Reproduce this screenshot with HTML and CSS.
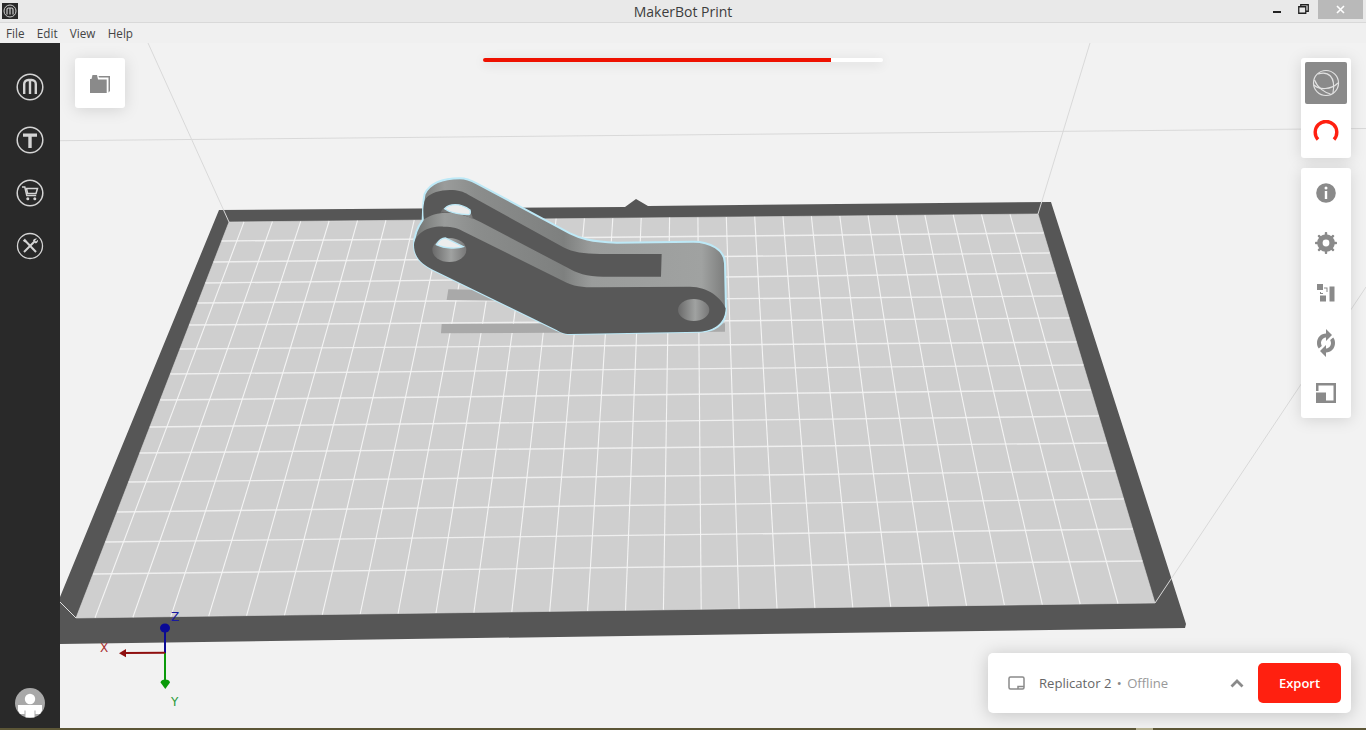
FILE: index.html
```html
<!DOCTYPE html>
<html lang="en">
<head>
<meta charset="utf-8">
<title>MakerBot Print</title>
<link rel="stylesheet" href="styles.css">
</head>
<body>
<div class="app">
  <header class="titlebar">
    <div class="app-icon">
      <svg viewBox="0 0 16 16" width="16" height="16"><circle cx="8" cy="8" r="6" fill="none" stroke="#ccc" stroke-width="1"/><path d="M5 11.500V6.500a1.500 1.500 0 0 1 1.500-1.500h3A1.500 1.500 0 0 1 11 6.500v5M8 5v6.500" fill="none" stroke="#ccc" stroke-width="1.200"/></svg>
    </div>
    <div class="title">MakerBot Print</div>
    <div class="win-controls">
      <svg class="win-min" viewBox="0 0 8 2" width="8" height="2"><rect width="8" height="2" fill="#222"/></svg>
      <svg class="win-max" viewBox="0 0 11 10" width="11" height="10"><path d="M.75 2.750h7v6.500h-7zM2.750 2.500V.75h7.500v6.500H8" fill="none" stroke="#222" stroke-width="1.300"/></svg>
      <div class="win-close"><svg viewBox="0 0 9 9" width="9" height="9"><path d="M1 1l7 7M8 1L1 8" stroke="#fff" stroke-width="1.600"/></svg></div>
    </div>
  </header>
  <nav class="menubar"><span>File</span><span>Edit</span><span>View</span><span>Help</span></nav>
  <div class="main">
    <aside class="sidebar">
      <div class="side-top">
        <svg class="side-icon" viewBox="0 0 28 28"><circle cx="14" cy="14" r="12.800" fill="none" stroke="#d4d4d4" stroke-width="1.500"/><path d="M8.200 21V11a4 4 0 0 1 4-4h3.600a4 4 0 0 1 4 4v10M14 7.500V21" fill="none" stroke="#d4d4d4" stroke-width="2.400"/></svg>
        <svg class="side-icon" viewBox="0 0 28 28"><circle cx="14" cy="14" r="12.800" fill="none" stroke="#d4d4d4" stroke-width="1.500"/><path d="M7 7.500h14v3.300h-5.300V22h-3.400V10.800H7z" fill="#d4d4d4"/></svg>
        <svg class="side-icon" viewBox="0 0 28 28"><circle cx="14" cy="14" r="12.800" fill="none" stroke="#d4d4d4" stroke-width="1.500"/><path d="M6 8h2.800l2 8.500h9.400" fill="none" stroke="#d4d4d4" stroke-width="1.500"/><path d="M10.500 9.500h11l-1.500 5h-8.400z" fill="none" stroke="#d4d4d4" stroke-width="1.500"/><circle cx="11.800" cy="19.800" r="1.500" fill="#d4d4d4"/><circle cx="18.800" cy="19.800" r="1.500" fill="#d4d4d4"/></svg>
        <svg class="side-icon" viewBox="0 0 28 28"><circle cx="14" cy="14" r="12.500" fill="none" stroke="#d4d4d4" stroke-width="1.300"/><path d="M9 8.500l11 11.500" stroke="#d4d4d4" stroke-width="2"/><path d="M18.500 9.500L8 20" stroke="#d4d4d4" stroke-width="2"/><path d="M6.800 8.800l2.200-2.200 1.600 2.600-1.400 1.400zM17 8.500c.5-1.500 2.500-2.500 4-1.800l-2 1.900 1 1 1.900-1.800c.5 1.600-.6 3.400-2.300 3.800z" fill="#d4d4d4"/></svg>
      </div>
      <svg class="avatar" viewBox="0 0 30 30"><circle cx="15" cy="15" r="15" fill="#a8a8a8"/><circle cx="15" cy="11" r="5.200" fill="#fff"/><path d="M3 17h24v5.500l-2 3.500h-4.500v-3.500h-1V29.500h-9V22.500h-1V26H5l-2-3.500z" fill="#fff"/></svg>
    </aside>
    <section class="viewport">
      <svg class="scene" viewBox="60 43 1306 685" width="1306" height="685">
        <defs>
          <linearGradient id="band" gradientUnits="userSpaceOnUse" x1="40" y1="0" x2="980" y2="0">
            <stop offset="0" stop-color="#6f716f"/>
            <stop offset=".1" stop-color="#9a9c9b"/>
            <stop offset=".2" stop-color="#8b8d8c"/>
            <stop offset=".48" stop-color="#7e807f"/>
            <stop offset=".57" stop-color="#9a9c9b"/>
            <stop offset=".92" stop-color="#a0a2a1"/>
            <stop offset="1" stop-color="#7a7b7a"/>
          </linearGradient>
          <linearGradient id="hole" x1="0" y1="0" x2="1" y2="0">
            <stop offset="0" stop-color="#6a6a6a"/>
            <stop offset=".55" stop-color="#a0a2a1"/>
            <stop offset="1" stop-color="#777"/>
          </linearGradient>
        </defs>
        <line class="guide" x1="60" y1="140.700" x2="1366" y2="128.500"/>
        <polygon class="frame" points="219,210 625,207 636,199 648,206 1051,202 1186,624 1185,628 60,644 60,597"/>
        <polygon class="plate" points="229,222 1038,214 1155,603 76,618"/>
        <g class="guides">
          <line x1="148" y1="43" x2="229" y2="222"/>
          <line x1="1090" y1="43" x2="1038" y2="214"/>
          <line x1="1366" y1="287" x2="1155" y2="603"/>
        </g>
        <path class="cut" d="M60 602L76 618"/>
        <g class="grid-h">
          <line x1="221.700" y1="241" x2="1043.700" y2="233"/>
          <line x1="213.500" y1="262" x2="1049.700" y2="253"/>
          <line x1="205.400" y1="283" x2="1055.700" y2="273"/>
          <line x1="197.700" y1="303" x2="1062.700" y2="296"/>
          <line x1="189.200" y1="325" x2="1069.300" y2="318"/>
          <line x1="179.900" y1="349" x2="1076.500" y2="342"/>
          <line x1="170.300" y1="374" x2="1083.400" y2="365"/>
          <line x1="160.200" y1="400" x2="1090.900" y2="390"/>
          <line x1="149.800" y1="427" x2="1098.800" y2="416"/>
          <line x1="139.700" y1="453" x2="1106.900" y2="443"/>
          <line x1="128.500" y1="482" x2="1115.300" y2="471"/>
          <line x1="117" y1="512" x2="1123.700" y2="499"/>
          <line x1="105.400" y1="542" x2="1132.800" y2="529"/>
          <line x1="93" y1="574" x2="1142.400" y2="561"/>
        </g>
        <g class="grid-v">
          <line x1="244" y1="221.900" x2="95" y2="617.700"/>
          <line x1="272.400" y1="221.600" x2="132.900" y2="617.200"/>
          <line x1="300.700" y1="221.300" x2="170.800" y2="616.700"/>
          <line x1="329.100" y1="221" x2="208.700" y2="616.200"/>
          <line x1="357.500" y1="220.700" x2="246.600" y2="615.600"/>
          <line x1="385.900" y1="220.400" x2="284.500" y2="615.100"/>
          <line x1="414.200" y1="220.200" x2="322.300" y2="614.600"/>
          <line x1="442.600" y1="219.900" x2="360.200" y2="614"/>
          <line x1="471" y1="219.600" x2="398.100" y2="613.500"/>
          <line x1="499.300" y1="219.300" x2="436" y2="613"/>
          <line x1="527.700" y1="219" x2="473.900" y2="612.500"/>
          <line x1="556.100" y1="218.700" x2="511.800" y2="611.900"/>
          <line x1="584.400" y1="218.500" x2="549.700" y2="611.400"/>
          <line x1="612.800" y1="218.200" x2="587.600" y2="610.900"/>
          <line x1="641.200" y1="217.900" x2="625.500" y2="610.300"/>
          <line x1="669.600" y1="217.600" x2="663.400" y2="609.800"/>
          <line x1="697.900" y1="217.400" x2="701.200" y2="609.300"/>
          <line x1="726.300" y1="217.100" x2="739.100" y2="608.800"/>
          <line x1="754.700" y1="216.800" x2="777" y2="608.200"/>
          <line x1="783" y1="216.500" x2="814.900" y2="607.700"/>
          <line x1="811.400" y1="216.200" x2="852.800" y2="607.200"/>
          <line x1="839.800" y1="216" x2="890.700" y2="606.600"/>
          <line x1="868.100" y1="215.700" x2="928.600" y2="606.100"/>
          <line x1="896.500" y1="215.400" x2="966.500" y2="605.600"/>
          <line x1="924.900" y1="215.100" x2="1004.400" y2="605"/>
          <line x1="953.200" y1="214.800" x2="1042.300" y2="604.500"/>
          <line x1="981.600" y1="214.600" x2="1080.200" y2="604"/>
          <line x1="1010" y1="214.300" x2="1118" y2="603.500"/>
        </g>
        <g transform="translate(400 170) scale(.33333)">
          <path class="shadow" d="M145 358L250 360L300 392L140 390zM125 462L975 460V485L123 490z"/>
          <path class="body-out" d="M42 225C42 195 50 175 68 150C70 120 68 95 74 72C90 40 125 25 180 25C200 25 215 32 230 40L510 190C540 205 570 215 650 218L880 215C930 215 975 240 975 280L978 420C978 465 940 485 900 485L510 492C490 492 480 486 470 480L100 300C70 285 42 265 42 225z"/>
          <path class="face" d="M72 148C68 125 70 95 78 85C92 68 120 60 150 60C175 60 190 65 205 74L490 232C520 247 550 252 600 252H785L783 320H610C560 320 530 310 500 292L240 155C215 142 180 130 150 128C115 127 90 135 72 148z"/>
          <path class="face" d="M42 225C45 190 85 168 130 170C160 170 175 175 195 187L500 338C530 352 560 352 600 352L870 350C925 350 965 385 977 415C975 460 940 483 900 485L510 492C490 492 480 486 470 480L100 300C70 285 42 265 42 225z"/>
          <path class="holeg" d="M122 128C125 112 150 104 175 108C200 112 220 130 218 148C190 132 150 122 122 128z"/>
          <path class="slit" d="M134 116C148 101 180 98 210 120C212 128 212 132 207 134C180 133 150 128 134 116z"/>
          <ellipse class="holeg" cx="148" cy="240" rx="51" ry="36"/>
          <path class="slit" d="M109 224C116 212 126 204 136 204L190 230C175 236 135 237 109 224z"/>
          <ellipse class="holeg" cx="881" cy="420" rx="47" ry="33"/>
        </g>
        <g class="axes">
          <line class="ax-b" x1="165" y1="628" x2="165" y2="653"/>
          <ellipse class="ax-bf" cx="165" cy="628" rx="5" ry="4.500"/>
          <line class="ax-g" x1="165" y1="653" x2="165" y2="682"/>
          <path class="ax-gf" d="M160.500 682.500a4.800 3.500 0 0 1 9.500 0l-4.700 6.500z"/>
          <line class="ax-r" x1="165" y1="652.800" x2="124" y2="653"/>
          <path class="ax-rf" d="M119 653.300l7-4.300v8.300z"/>
          <text class="lbl lbl-x" x="100" y="652">X</text>
          <text class="lbl lbl-z" x="171" y="621">Z</text>
          <text class="lbl lbl-y" x="171" y="706">Y</text>
        </g>
      </svg>

      <div class="card open-card">
        <svg viewBox="0 0 20 19" width="20" height="19"><path d="M0 5V19H16.700V5.500H8L7 1H2.500L1.500 5z" fill="#8a8a8a"/><path d="M8.500 2H20V17L18.500 18.500V3.500H9z" fill="#8a8a8a"/></svg>
      </div>

      <div class="progress"><div class="progress-fill bar-87"></div></div>

      <div class="tools">
        <div class="card tool-card short">
          <div class="tool active"><svg viewBox="0 0 28 28" width="28" height="28"><g fill="none" stroke="#e2e2e2" stroke-width="1.200"><circle cx="14" cy="14" r="12.500"/><path d="M2 16c5 5 17 5 24-2"/><path d="M6 5c10-3 18 2 15 19"/><path d="M2.500 11c3 8 11 13 16 14"/></g></svg></div>
          <div class="tool"><svg viewBox="0 0 26 22" width="26" height="22"><path d="M5 19.500A10.800 10.800 0 1 1 21 19.500" fill="none" stroke="#ff2010" stroke-width="3.400"/></svg></div>
        </div>
        <div class="card tool-card">
          <div class="tool"><svg viewBox="0 0 20 20" width="20" height="20"><circle cx="10" cy="10" r="9.800" fill="#8a8a8a"/><circle cx="10" cy="5" r="1.500" fill="#fff"/><rect x="8.800" y="8" width="2.400" height="8" fill="#fff"/></svg></div>
          <div class="tool"><svg viewBox="0 0 22 22" width="22" height="22"><g fill="#8a8a8a"><circle cx="11" cy="11" r="8.800"/><rect x="9.800" y="0" width="2.400" height="22" rx=".8"/><rect x="9.800" y="0" width="2.400" height="22" rx=".8" transform="rotate(45 11 11)"/><rect x="9.800" y="0" width="2.400" height="22" rx=".8" transform="rotate(90 11 11)"/><rect x="9.800" y="0" width="2.400" height="22" rx=".8" transform="rotate(135 11 11)"/></g><circle cx="11" cy="11" r="3.400" fill="#fff"/></svg></div>
          <div class="tool"><svg viewBox="0 0 18 18" width="18" height="18"><g fill="#8a8a8a"><rect width="6" height="6" x="0" y="0"/><rect width="6" height="6" x="3" y="11.500"/><rect width="5" height="15" x="12.500" y="2.500"/><path d="M7 3.500h3.500V8H9.500V4.500H7zM3 8v2h3V9H4V8z"/></g></svg></div>
          <div class="tool"><svg viewBox="0 0 20 28" width="20" height="28"><g fill="#8a8a8a"><path d="M10 4.500c-5 0-9 4-9 9.500 0 2 .5 4 1.800 5.500l3-2.600C5.500 16 5 15 5 14c0-3 2.300-5.500 5-5.500V12l6-6-6-6z"/><path d="M10 23.500c5 0 9-4 9-9.500 0-2-.5-4-1.800-5.500l-3 2.600c.3.900.8 1.900.8 2.900 0 3-2.300 5.500-5 5.500V16l-6 6 6 6z"/></g></svg></div>
          <div class="tool"><svg viewBox="0 0 20 20" width="20" height="20"><g fill="#8a8a8a"><path d="M0 0H20V20H10V17.500H17.500V2.500H2.500V8H0z"/><rect x="0" y="9.500" width="10" height="10.500"/></g></svg></div>
        </div>
      </div>

      <div class="card printer-bar">
        <svg class="printer-icon" viewBox="0 0 17 14" width="17" height="14"><rect x="1" y="1" width="15" height="12" rx="1.500" fill="none" stroke="#8a8a8a" stroke-width="1.500"/><path d="M10 13V10.500h6" fill="none" stroke="#8a8a8a" stroke-width="1.500"/></svg>
        <div class="printer-name">Replicator 2<span class="dot"> • </span><span class="offline">Offline</span></div>
        <svg class="chevron" viewBox="0 0 14 9" width="14" height="9"><path d="M1.500 7.500L7 2l5.500 5.500" fill="none" stroke="#8a8a8a" stroke-width="2.800"/></svg>
        <button class="export">Export</button>
      </div>
    </section>
  </div>
  <div class="desktop-strip"><span class="task-tab"></span></div>
</div>
</body>
</html>
```

FILE: styles.css
```css
* { box-sizing: border-box; }
html, body { margin: 0; height: 100%; }
body { font-family: "Open Sans", "Noto Sans", sans-serif; overflow: hidden; background: #f2f2f2; }
.app { width: 1366px; height: 730px; display: flex; flex-direction: column; }

.titlebar { height: 23px; flex: none; background: #e9e9e9; border-bottom: 1px solid #d9d9d9; display: flex; position: relative; }
.app-icon { width: 16px; height: 16px; margin: 3px 0 0 2px; background: #2a2a2a; display: flex; align-items: center; justify-content: center; }
.title { position: absolute; left: 0; right: 0; top: 2px; text-align: center; font-size: 14px; line-height: 19px; color: #3d3d3d; }
.win-controls { margin-left: auto; display: flex; align-items: flex-start; padding-right: 3px; }
.win-min { margin-top: 11px; margin-right: 17px; }
.win-max { margin-top: 4px; margin-right: 9px; }
.win-close { width: 45px; height: 19px; background: #b9b9b9; display: flex; align-items: center; justify-content: center; }

.menubar { height: 20px; flex: none; background: #f0f0f0; display: flex; gap: 12.3px; padding-left: 6px; font-size: 11.7px; line-height: 20px; color: #444; }

.main { flex: 1; display: flex; min-height: 0; }
.sidebar { width: 60px; flex: none; background: #292929; display: flex; flex-direction: column; align-items: center; justify-content: space-between; padding: 30px 0 10px; }
.side-top { display: flex; flex-direction: column; gap: 25px; }
.side-icon { width: 28px; height: 28px; display: block; }
.avatar { width: 30px; height: 30px; display: block; }

.viewport { flex: 1; position: relative; overflow: hidden; background: #f2f2f2; }
.scene { position: absolute; left: 0; top: 0; display: block; }
.guide, .guides line { stroke: #d9d9d9; stroke-width: 1; }
.frame { fill: #565656; }
.plate { fill: #cfcfcf; stroke: #dcdcdc; stroke-width: .6; }
.cut { stroke: #e0e0e0; stroke-width: 1; fill: none; }
.grid-h line { stroke: #efefef; stroke-width: 1.4; }
.grid-v line { stroke: #f4f4f4; stroke-width: 1.1; }
.shadow { fill: #a9a9a9; }
.body-out { fill: url(#band); stroke: #bde9f7; stroke-width: 6; stroke-linejoin: round; }
.face { fill: #585858; }
.holeg { fill: url(#hole); }
.slit { fill: #ededed; stroke: #bde9f7; stroke-width: 4; }
.ax-b { stroke: #0a0a96; stroke-width: 2; }
.ax-bf { fill: #0a0a96; }
.ax-g { stroke: #0a9a0a; stroke-width: 2; }
.ax-gf { fill: #0a9a0a; }
.ax-r { stroke: #8f0f0f; stroke-width: 2; }
.ax-rf { fill: #8f0f0f; }
.lbl { font-family: "DejaVu Sans", sans-serif; font-size: 12px; }
.lbl-x { fill: #a63030; }
.lbl-z { fill: #1a1aa0; }
.lbl-y { fill: #2a9a3a; }

.card { background: #fff; border-radius: 3px; box-shadow: 0 2px 16px rgba(0,0,0,.13); }
.open-card { position: absolute; left: 15px; top: 15px; width: 50px; height: 50px; display: flex; align-items: center; justify-content: center; }
.progress { position: absolute; left: 423px; top: 15px; width: 400px; height: 4px; border-radius: 2px; background: #fff; box-shadow: 0 2px 12px rgba(0,0,0,.14); overflow: hidden; }
.progress-fill { height: 100%; background: #ee1100; }
.bar-87 { width: 87%; }
.tools { position: absolute; left: 1241px; top: 15px; width: 50px; display: flex; flex-direction: column; gap: 10px; }
.tool-card { display: flex; flex-direction: column; align-items: center; padding: 0 4px; height: 250px; }
.tool-card.short { height: 100px; padding-top: 4px; }
.tool { width: 42px; height: 50px; display: flex; align-items: center; justify-content: center; flex: none; }
.tool.active { height: 42px; background: #8a8a8a; border-radius: 2px; }
.short .tool:not(.active) { height: 54px; }

.printer-bar { position: absolute; left: 928px; top: 610px; width: 363px; height: 60px; border-radius: 5px; display: flex; align-items: center; padding: 0 10px 0 20px; box-shadow: 0 2px 18px rgba(0,0,0,.2); }
.printer-icon { flex: none; }
.printer-name { margin-left: 14px; font-size: 13.1px; color: #666; white-space: nowrap; }
.dot { color: #888; margin: 0 2px; }
.offline { color: #999; }
.chevron { margin-left: auto; margin-right: 14px; flex: none; }
.export { width: 83px; height: 40px; background: #ff2010; color: #fff; border: 0; border-radius: 5px; font-family: inherit; font-size: 13px; font-weight: 600; padding: 0; flex: none; }

.desktop-strip { height: 2px; flex: none; background: #5c5636; display: flex; padding-left: 1136px; }
.task-tab { width: 17px; height: 2px; background: #b5b08f; }
```
